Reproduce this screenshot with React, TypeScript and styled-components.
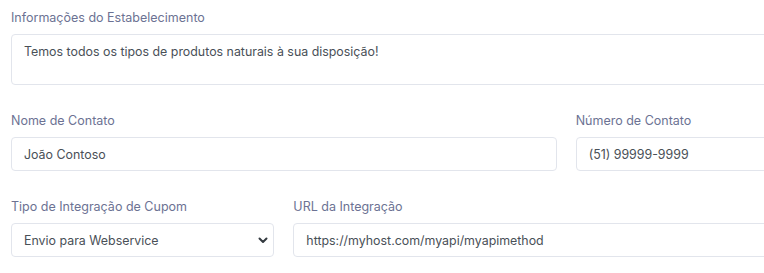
import React from "react";
import styled, { createGlobalStyle } from "styled-components";

const Global = createGlobalStyle`
  html, body { margin: 0; padding: 0; background: #ffffff; overflow: hidden; }
  body { font-family: Inter, "Noto Sans", sans-serif; }
`;

const Form = styled.form`
  width: 828px;
  padding: 9px 0 0 11px;
  display: grid;
  grid-template-columns: repeat(12, 1fr);
  column-gap: 19px;
  row-gap: 27px;
`;

const Field = styled.div<{ span: number }>`
  grid-column: span ${(p) => p.span};
  display: flex;
  flex-direction: column;
  gap: 8px;
`;

const Label = styled.label`
  font-size: 12.5px;
  line-height: 17px;
  color: #6c7293;
  white-space: nowrap;
`;

const baseInput = `
  box-sizing: border-box;
  width: 100%;
  border: 1px solid #e2e5ec;
  border-radius: 4px;
  background: #ffffff;
  font-family: Inter, "Noto Sans", sans-serif;
  font-size: 12.4px;
  color: #495057;
  outline: none;
`;

const Input = styled.input`
  ${baseInput}
  height: 34px;
  padding: 0 12px;
`;

const TextArea = styled.textarea`
  ${baseInput}
  height: 51px;
  padding: 8px 12px;
  resize: none;
  line-height: 18px;
`;

const SelectWrap = styled.div`
  position: relative;
`;

const Select = styled.select`
  ${baseInput}
  height: 34px;
  padding: 0 30px 0 12px;
  appearance: none;
`;

const Chevron = styled.svg`
  position: absolute;
  right: 5px;
  top: 50%;
  transform: translateY(-50%);
  pointer-events: none;
`;

export default function App() {
  return (
    <>
      <Global />
      <Form onSubmit={(e) => e.preventDefault()}>
        <Field span={12}>
          <Label>Informações do Estabelecimento</Label>
          <TextArea defaultValue="Temos todos os tipos de produtos naturais à sua disposição!" />
        </Field>
        <Field span={8}>
          <Label>Nome de Contato</Label>
          <Input defaultValue="João Contoso" />
        </Field>
        <Field span={4}>
          <Label>Número de Contato</Label>
          <Input defaultValue="(51) 99999-9999" />
        </Field>
        <Field span={4}>
          <Label>Tipo de Integração de Cupom</Label>
          <SelectWrap>
            <Select defaultValue="ws">
              <option value="ws">Envio para Webservice</option>
            </Select>
            <Chevron width="12" height="12" viewBox="0 0 12 12">
              <path d="M2.5 4.5 L6 8 L9.5 4.5" fill="none" stroke="#343a40" strokeWidth="2" strokeLinecap="round" strokeLinejoin="round" />
            </Chevron>
          </SelectWrap>
        </Field>
        <Field span={8}>
          <Label>URL da Integração</Label>
          <Input defaultValue="https://myhost.com/myapi/myapimethod" />
        </Field>
      </Form>
    </>
  );
}
